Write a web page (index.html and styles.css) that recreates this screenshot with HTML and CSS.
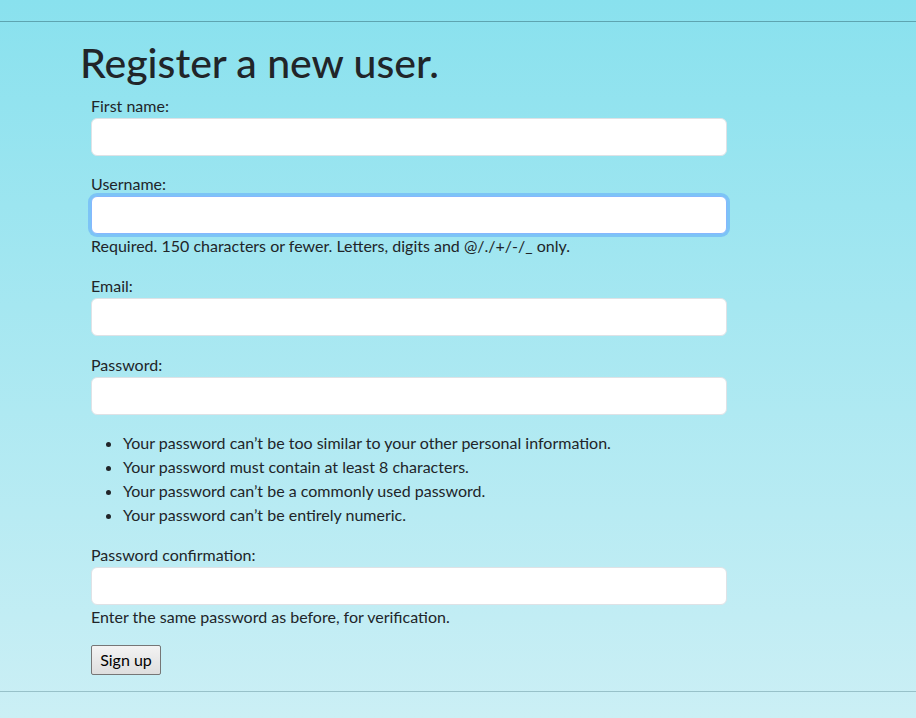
FILE: index.html
```html
<!DOCTYPE html>
<html lang="en">
<head>
<meta charset="utf-8">
<title>Register</title>
<link rel="stylesheet" href="styles.css">
</head>
<body>
<div class="page">
  <hr class="rule">
  <main class="content">
    <h1 class="title">Register a new user.</h1>
    <form class="form">
      <p class="field">
        <label class="label" for="first">First name:</label>
        <input class="control" id="first" type="text">
      </p>
      <p class="field">
        <label class="label" for="user">Username:</label>
        <input class="control focused" id="user" type="text">
        <span class="help">Required. 150 characters or fewer. Letters, digits and @/./+/-/_ only.</span>
      </p>
      <p class="field field-email">
        <label class="label" for="email">Email:</label>
        <input class="control" id="email" type="email">
      </p>
      <p class="field">
        <label class="label" for="pw">Password:</label>
        <input class="control" id="pw" type="password">
      </p>
      <ul class="rules">
        <li>Your password can’t be too similar to your other personal information.</li>
        <li>Your password must contain at least 8 characters.</li>
        <li>Your password can’t be a commonly used password.</li>
        <li>Your password can’t be entirely numeric.</li>
      </ul>
      <p class="field">
        <label class="label" for="pw2">Password confirmation:</label>
        <input class="control" id="pw2" type="password">
        <span class="help">Enter the same password as before, for verification.</span>
      </p>
      <button class="submit" type="button">Sign up</button>
    </form>
  </main>
  <hr class="rule bottom">
</div>
</body>
</html>
```

FILE: styles.css
```css
html, body {
  margin: 0;
  padding: 0;
}
body {
  font-family: Lato, "Liberation Sans", sans-serif;
  font-size: 16px;
  line-height: 1.5;
  color: #212529;
  background: linear-gradient(180deg, #89e1ee 0%, #cbeff5 100%);
  min-height: 718px;
}
.page {
  padding-top: 21px;
  min-height: 718px;
  box-sizing: border-box;
}
.rule {
  margin: 0;
  border: 0;
  height: 1px;
  background: rgba(40, 90, 100, 0.45);
}
.rule.bottom {
  background: rgba(60, 110, 120, 0.35);
}
.content {
  padding: 16px 0 16px 80px;
}
.title {
  margin: 0 0 7px 0;
  padding-top: 1px;
  font-size: 41px;
  font-weight: 500;
  line-height: 48px;
}
.form {
  margin: 0 0 0 11px;
  width: 636px;
}
.field {
  margin: 0 0 16px 0;
}
.field-email {
  margin-bottom: 17px;
}
.label {
  display: block;
}
.control {
  display: block;
  box-sizing: border-box;
  width: 100%;
  height: 38px;
  margin: 0;
  padding: 6px 12px;
  font: inherit;
  background: #fff;
  border: 1px solid #dee2e6;
  border-radius: 6px;
  outline: none;
}
.control.focused {
  border-color: #86b7fe;
  box-shadow: 0 0 0 3px #7cc4f6;
}
.help {
  display: block;
}
.rules {
  margin: 0 0 16px 0;
  padding-left: 32px;
}
.submit {
  display: block;
  height: 30px;
  width: 70px;
  padding: 0;
  font: inherit;
  font-size: 16px;
  color: #000;
  background: linear-gradient(180deg, #f3f3f3 0%, #dedede 100%);
  border: 1px solid #767676;
  border-radius: 2px;
}
```
